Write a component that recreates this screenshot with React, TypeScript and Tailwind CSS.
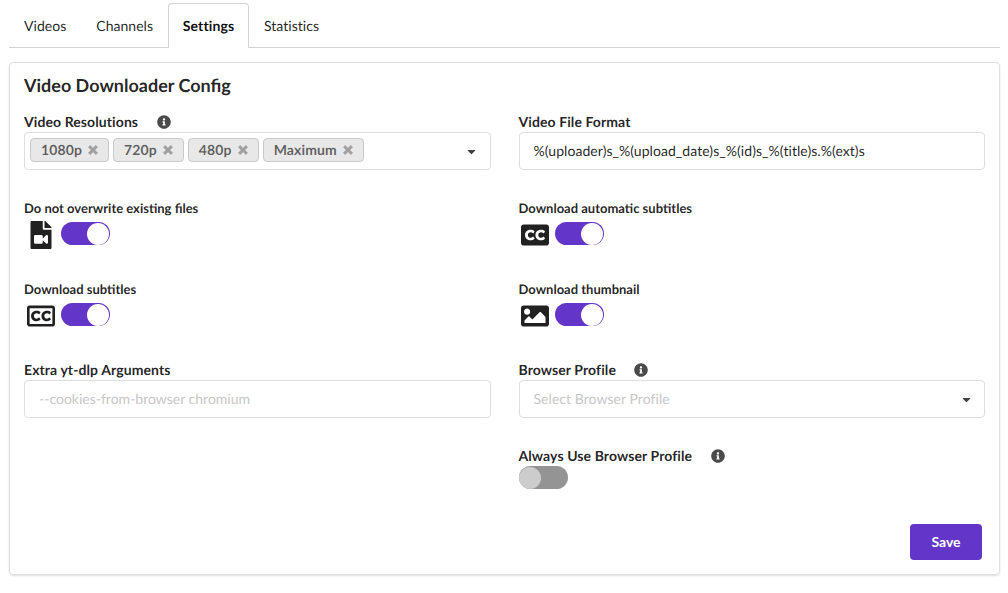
import type { ReactNode } from "react";
import {
  FaCaretDown,
  FaClosedCaptioning,
  FaFileVideo,
  FaImage,
  FaInfoCircle,
  FaRegClosedCaptioning,
} from "react-icons/fa";

const tabs = ["Videos", "Channels", "Settings", "Statistics"];
const resolutions = ["1080p", "720p", "480p", "Maximum"];

function Tabs({ active }: { active: string }) {
  return (
    <nav className="flex h-[45px] border-b border-[#d4d4d5]">
      {tabs.map((tab) => (
        <a
          key={tab}
          className={
            tab === active
              ? "-mb-px flex h-[45px] w-[81px] items-center justify-center rounded-t border border-b-0 border-[#d4d4d5] bg-white font-bold tracking-[0.1px] text-black/95"
              : "flex h-[45px] items-center px-[15px] tracking-[0.03px] text-black/87"
          }
        >
          {tab}
        </a>
      ))}
    </nav>
  );
}

function Label({ children, info }: { children: ReactNode; info?: boolean }) {
  return (
    <div className="flex h-5 items-center font-bold tracking-[0.09px]">
      {children}
      {info && <FaInfoCircle className="ml-[18.5px] size-[14px] text-[#4a4a4a]" />}
    </div>
  );
}

function Box({ children }: { children: ReactNode }) {
  return (
    <div className="flex h-[38px] items-center rounded border border-[#dededf] bg-white px-[14px]">
      {children}
    </div>
  );
}

function DeleteIcon() {
  return (
    <svg viewBox="0 0 10 10" className="ml-[6px] size-[10px]" aria-hidden="true">
      <path d="M2.2 2.2 7.8 7.8M7.8 2.2 2.2 7.8" stroke="#a0a0a0" strokeWidth="3" strokeLinecap="square" fill="none" />
    </svg>
  );
}

function Toggle({ on }: { on?: boolean }) {
  return (
    <button
      className={
        on
          ? "flex h-[23px] w-[49px] items-center justify-end rounded-full bg-[#6435c9] pr-px"
          : "flex h-[23px] w-[49px] items-center rounded-full bg-[#949494]"
      }
    >
      <span className={on ? "size-[22px] rounded-full bg-white" : "size-[22px] rounded-full bg-[#cccccc]"} />
    </button>
  );
}

function ToggleField({ label, icon }: { label: string; icon: ReactNode }) {
  return (
    <div>
      <div className="h-[22px] text-[13px] leading-[17px] font-bold">{label}</div>
      <div className="flex gap-[3.6px]">
        <div className="-mt-[0.6px] flex h-[28px] w-[33px] justify-center text-[28px]">{icon}</div>
        <Toggle on />
      </div>
    </div>
  );
}

export default function App() {
  return (
    <div className="h-[593px] bg-white pt-[3px] pr-2 pl-[9px] font-['Lato',sans-serif] text-[14px] leading-5 text-black/87 [text-rendering:geometricPrecision]">
      <Tabs active="Settings" />
      <main className="mt-[14px] flex h-[513px] flex-col rounded border border-[#dededf] px-[14px] pt-[11px] shadow-[0_1px_2px_0_rgba(34,36,38,0.15)]">
        <h1 className="text-[18px] leading-[22px] font-bold">Video Downloader Config</h1>
        <div className="mt-[16px] grid grid-cols-2 grid-rows-[88px_81px_79px_86px_60px] gap-x-7">
          <div>
            <Label info>Video Resolutions</Label>
            <div className="flex h-[38px] items-center rounded border border-[#dededf] pr-[11.5px] pl-[5px]">
              <div className="mb-[2px] flex gap-1">
                {resolutions.map((value) => (
                  <span
                    key={value}
                    className="flex h-6 items-center rounded border border-[#c8c9c9] bg-[#e8e8e8] px-[10px] font-bold tracking-[0.12px] text-black/60"
                  >
                    {value}
                    <DeleteIcon />
                  </span>
                ))}
              </div>
              <FaCaretDown className="ml-auto size-[13px] text-[#404040]" />
            </div>
          </div>
          <div>
            <Label>Video File Format</Label>
            <Box>
              <span className="tracking-[0.06px]">%(uploader)s_%(upload_date)s_%(id)s_%(title)s.%(ext)s</span>
            </Box>
          </div>
          <ToggleField label="Do not overwrite existing files" icon={<FaFileVideo />} />
          <ToggleField label="Download automatic subtitles" icon={<FaClosedCaptioning />} />
          <ToggleField label="Download subtitles" icon={<FaRegClosedCaptioning />} />
          <ToggleField label="Download thumbnail" icon={<FaImage />} />
          <div>
            <Label>Extra yt-dlp Arguments</Label>
            <Box>
              <span className="text-[#c7c7c7]">--cookies-from-browser chromium</span>
            </Box>
          </div>
          <div>
            <Label info>Browser Profile</Label>
            <Box>
              <span className="tracking-[0.05px] text-[#c7c7c7]">Select Browser Profile</span>
              <FaCaretDown className="-mr-[3px] ml-auto size-[13px] text-[#404040]" />
            </Box>
          </div>
          <div className="col-start-2">
            <Label info>Always Use Browser Profile</Label>
            <Toggle />
          </div>
        </div>
        <button className="mt-[18px] mr-[3px] h-9 w-[72px] self-end rounded bg-[#6435c9] font-bold text-white">
          Save
        </button>
      </main>
    </div>
  );
}
